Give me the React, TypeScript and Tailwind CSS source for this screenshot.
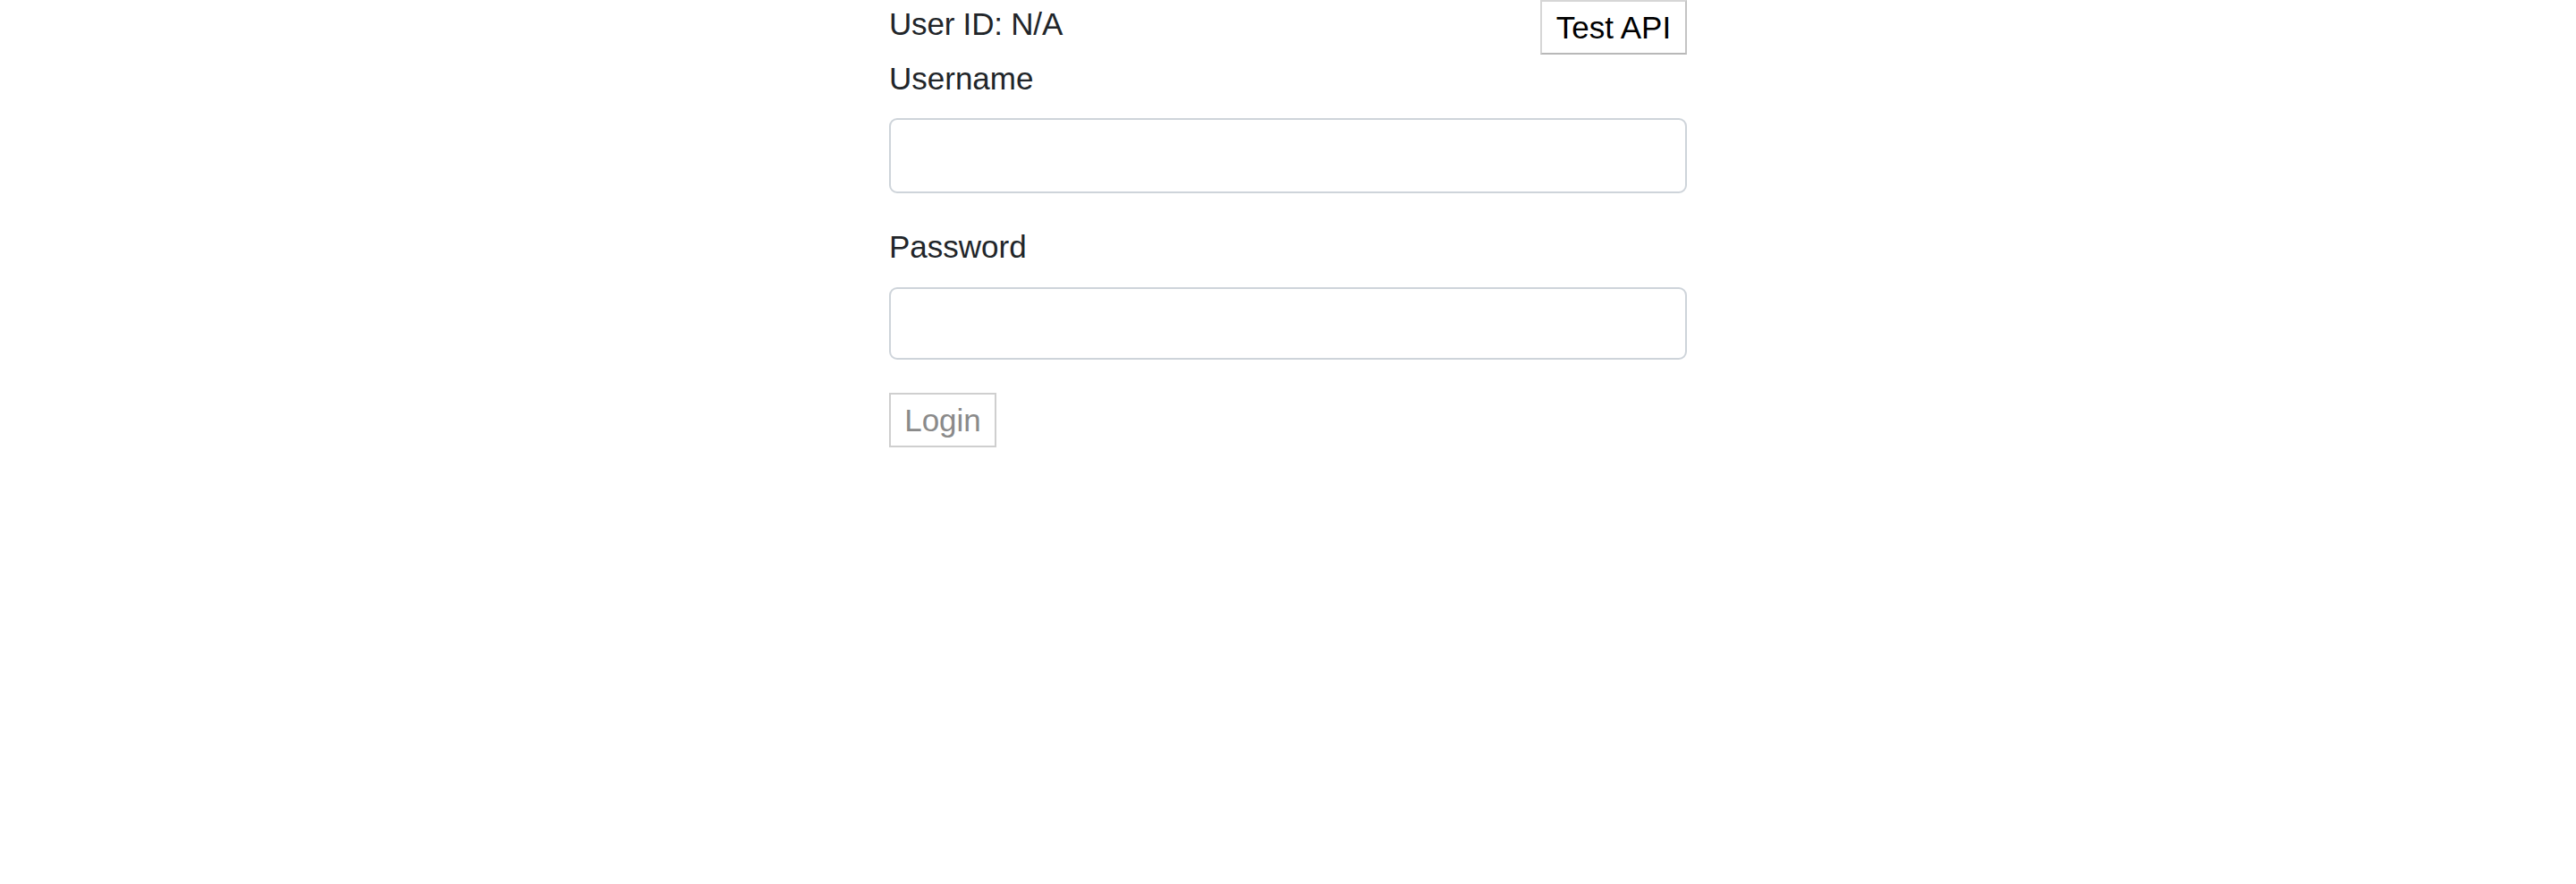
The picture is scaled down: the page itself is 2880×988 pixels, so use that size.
import React, { useState } from 'react';

const font = { fontFamily: '"Liberation Sans", Arial, sans-serif' };

export default function App() {
    const [username, setUsername] = useState('');
    const [password, setPassword] = useState('');
    const userId: string | null = null;

    return (
        <div className="min-h-[988px] w-full bg-white text-[#212529]" style={font}>
            <div className="mx-auto w-[892px] text-[35px] leading-[53px]">
                <div className="flex h-[61px] items-start justify-between">
                    <div className="tracking-[-0.2px]">User ID: {userId ?? 'N/A'}</div>
                    <button
                        type="button"
                        className="flex h-[61px] w-[164px] items-center justify-center border-2 border-[#d6d6d6] border-r-[#c4c4c4] border-b-[#b8b8b8] bg-white text-black"
                    >
                        Test API
                    </button>
                </div>

                <label htmlFor="username" className="block mb-[18px]">
                    Username
                </label>
                <input
                    id="username"
                    type="text"
                    value={username}
                    onChange={(e) => setUsername(e.target.value)}
                    className="block h-[84px] w-full rounded-[9px] border-2 border-[#ced4da] bg-white px-[26px] outline-none"
                />

                <label htmlFor="password" className="mt-[33px] mb-[19px] block">
                    Password
                </label>
                <input
                    id="password"
                    type="password"
                    value={password}
                    onChange={(e) => setPassword(e.target.value)}
                    className="block h-[81px] w-full rounded-[9px] border-2 border-[#ced4da] bg-white px-[26px] outline-none"
                />

                <button
                    type="button"
                    disabled={!username || !password}
                    className="mt-[37px] flex h-[61px] w-[120px] items-center justify-center border-2 border-[#cfcfcf] bg-white text-[#8a8a8a]"
                >
                    Login
                </button>
            </div>
        </div>
    );
}
